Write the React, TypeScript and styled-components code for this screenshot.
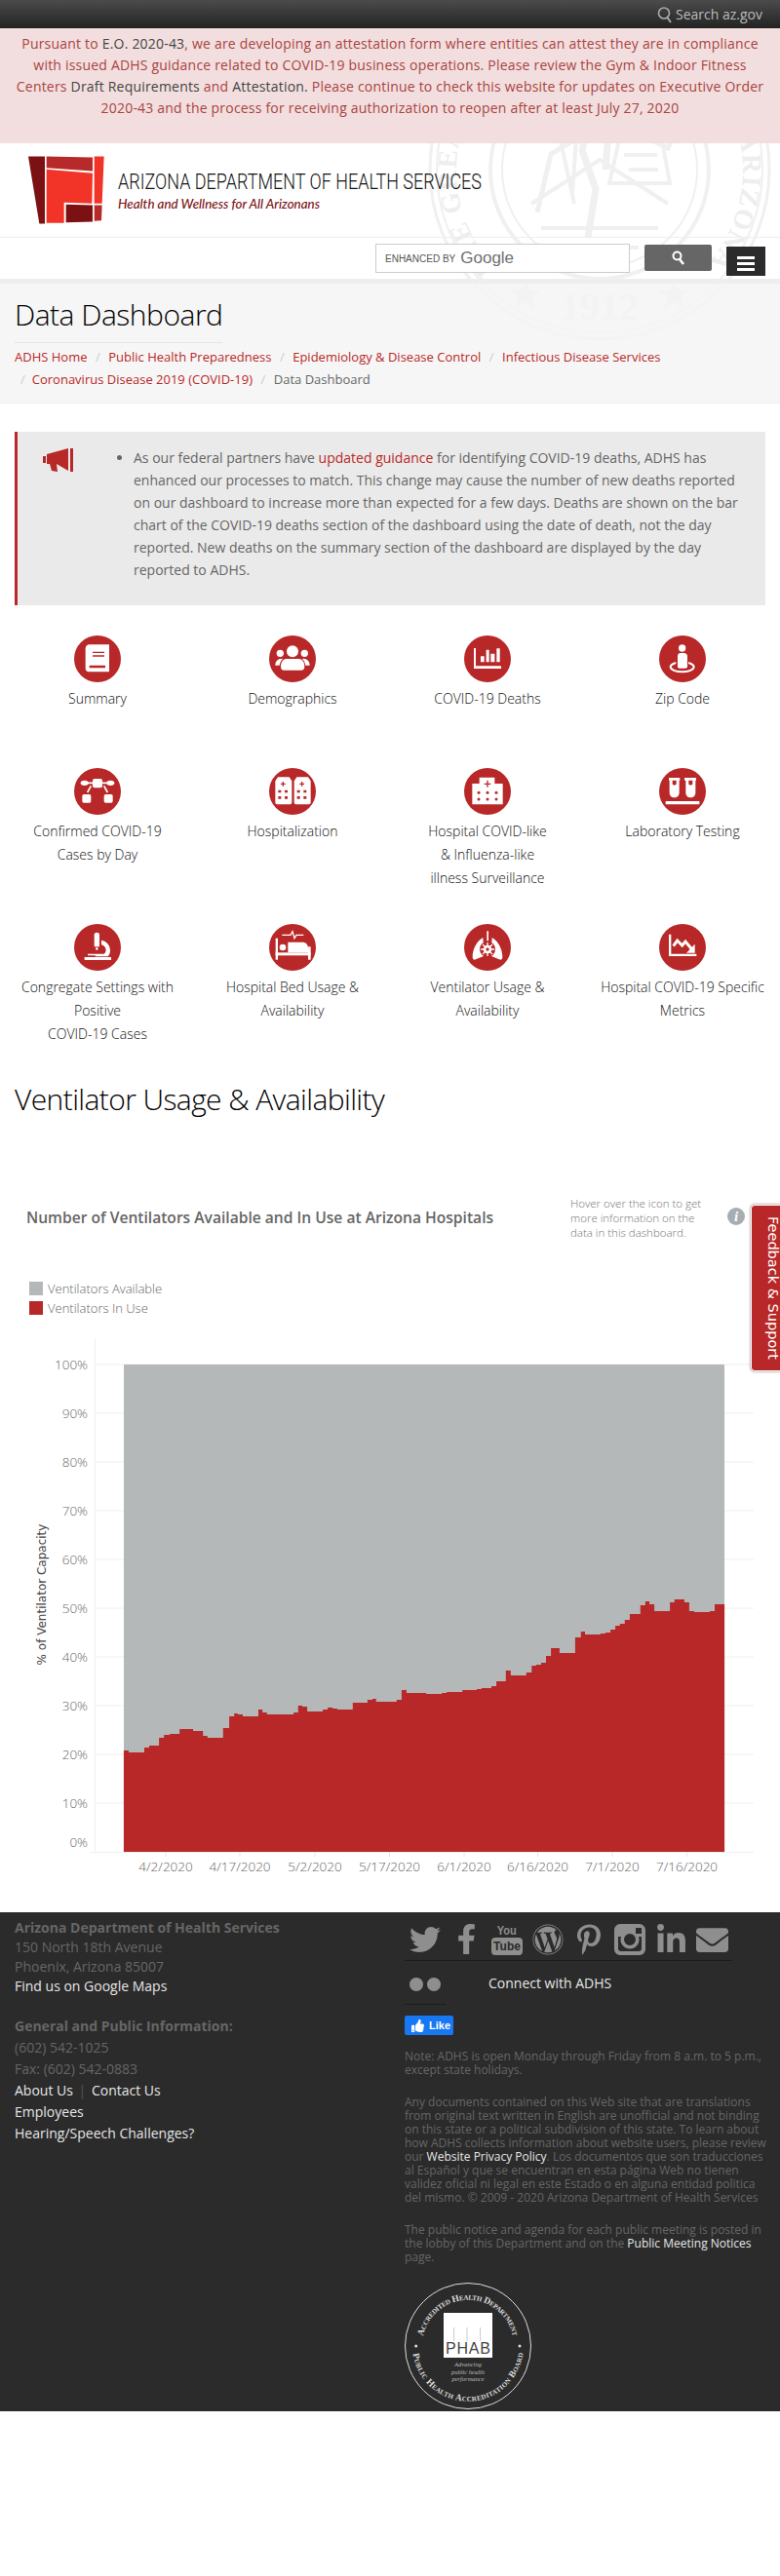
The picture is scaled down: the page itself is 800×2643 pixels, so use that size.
import React from "react";
import styled, { createGlobalStyle } from "styled-components";
import { FaTwitter, FaFacebookF, FaWordpress, FaPinterestP, FaLinkedinIn, FaEnvelope, FaThumbsUp } from "react-icons/fa";

const RED = "#b92828";

const GlobalStyle = createGlobalStyle`
  html, body { margin: 0; padding: 0; background: #fff; }
  body { font-family: "Open Sans", "Liberation Sans", sans-serif; font-size: 14px; color: #333; }
  * { box-sizing: border-box; }
`;

const steps: [number, number, number][] = [
  [64,76,588],[76,114,594],[114,126,579],[126,150,573],[150,162,549],[162,176,540],[176,200,537],[200,233,522],
  [233,257,528],[257,268,543],[268,306,549],[306,321,519],[321,333,483],[333,342,474],[342,354,477],[354,392,483],
  [392,402,462],[402,413,471],[413,478,477],[478,489,471],[489,499,450],[499,511,453],[511,549,468],[549,561,462],
  [561,573,456],[573,584,459],[584,622,462],[622,658,441],[658,670,432],[670,679,429],[679,729,438],[729,741,432],
  [741,753,402],[753,801,411],[801,839,414],[839,851,411],[851,889,408],[889,924,402],[924,936,399],[936,960,396],
  [960,972,390],[972,995,375],[995,1007,342],[1007,1045,357],[1045,1058,348],[1058,1069,327],[1069,1081,324],
  [1081,1093,318],[1093,1105,297],[1105,1126,273],[1126,1164,288],[1164,1178,240],[1178,1188,222],[1188,1226,231],
  [1226,1238,228],[1238,1250,225],[1250,1262,216],[1262,1273,204],[1273,1285,198],[1285,1297,186],[1297,1323,168],
  [1323,1335,141],[1335,1345,129],[1345,1357,138],[1357,1395,159],[1395,1406,132],[1406,1430,123],[1430,1442,132],
  [1442,1454,159],[1454,1492,162],[1492,1504,159],[1504,1528,138],
];

// chart svg starts at page y 1360, x 0
const BASE = 540;
const px = (x: number) => 100 + x / 2.376;
const py = (y: number) => 240 + y / 3;
const redArea =
  `M${px(64).toFixed(1)} ${BASE} ` +
  steps.map(([a, b, y]) => `L${px(a).toFixed(1)} ${py(y).toFixed(1)} L${px(b).toFixed(1)} ${py(y).toFixed(1)}`).join(" ") +
  ` L${px(1528).toFixed(1)} ${BASE} Z`;

const yTicks = [100, 90, 80, 70, 60, 50, 40, 30, 20, 10, 0];
const xTicks: [number, string][] = [
  [170, "4/2/2020"], [246, "4/17/2020"], [323, "5/2/2020"], [399.5, "5/17/2020"],
  [476, "6/1/2020"], [551.5, "6/16/2020"], [628, "7/1/2020"], [704.5, "7/16/2020"],
];

const Circle = () => <circle cx="72" cy="72" r="72" fill={RED} />;

const icons: Record<string, React.ReactNode> = {
  summary: (
    <>
      <Circle />
      <path fill="#fff" d="M47 28h61v84H46c-6 0-11-4-11-10V40c0-7 5-12 12-12z" />
      <path fill={RED} d="M57 50h36v4H57zM57 61h36v4H57zM47 92h49v8H47z" />
    </>
  ),
  demographics: (
    <>
      <Circle />
      <g fill="#fff">
        <circle cx="72" cy="49" r="18" />
        <circle cx="34" cy="55" r="11" />
        <circle cx="109" cy="55" r="11" />
        <path d="M52 72h40c11 0 17 12 17 24 0 7-4 11-10 11H46c-7 0-10-4-10-11 0-12 6-24 16-24z" />
        <path d="M19 92c0-12 8-21 19-21l4 1c-6 6-9 13-10 20zM125 92c0-12-8-21-19-21l-4 1c6 6 9 13 10 20z" />
      </g>
    </>
  ),
  deaths: (
    <>
      <Circle />
      <path fill="#fff" d="M30 39h6v55h78v8H30zM51 64h11v18H51zM68 44h9v38h-9zM82 56h12v26H82zM100 40h10v42h-10z" />
    </>
  ),
  zip: (
    <>
      <Circle />
      <ellipse cx="71" cy="97" rx="36" ry="15" fill="none" stroke="#fff" strokeWidth="6" />
      <circle cx="71" cy="39" r="11" fill="#fff" />
      <path fill={RED} d="M52 52h38v46H52z" />
      <path fill="#fff" d="M65 54h12c6 0 10 4 10 10v34l-6 3H62l-5-3V64c0-6 3-10 8-10z" />
    </>
  ),
  confirmed: (
    <>
      <Circle />
      <g fill="#fff">
        <rect x="57" y="33" width="30" height="28" rx="6" />
        <ellipse cx="32" cy="46" rx="12" ry="8" />
        <ellipse cx="112" cy="46" rx="12" ry="8" />
        <rect x="25" y="81" width="27" height="26" rx="5" />
        <rect x="92" y="81" width="27" height="26" rx="5" />
      </g>
      <path fill="none" stroke="#fff" strokeWidth="5" d="M42 46h16M102 46H86M52 55l-11 20M92 55l11 20" />
    </>
  ),
  hospitalization: (
    <>
      <Circle />
      <path fill="#fff" d="M27 28h35l8 12v66c0 4-2 6-6 6H25c-4 0-6-2-6-6V40zM85 28h35l8 12v66c0 4-2 6-6 6H83c-4 0-6-2-6-6V40z" />
      <path
        fill={RED}
        d="M41 42h4v5h5v4h-5v5h-4v-5h-5v-4h5zM99 42h4v5h5v4h-5v5h-4v-5h-5v-4h5zM28 68h9v8h-9zM48 68h9v8h-9zM28 87h9v8h-9zM48 87h9v8h-9zM86 68h9v8h-9zM106 68h9v8h-9zM86 87h9v8h-9zM106 87h9v8h-9z"
      />
    </>
  ),
  hospital: (
    <>
      <Circle />
      <path fill="#fff" d="M47 29h47v19h25v64H25V48h22z" />
      <path fill={RED} d="M70 38h4v9h8v4h-8v8h-4v-8h-8v-4h8z" />
      <g fill={RED}>
        {[45, 72, 99].map((cx) => [76, 96].map((cy) => <circle key={`${cx}-${cy}`} cx={cx} cy={cy} r="4.5" />))}
      </g>
    </>
  ),
  lab: (
    <>
      <Circle />
      <path fill="#fff" d="M30 30h34v8h-2v38c0 9-6 15-15 15s-15-6-15-15V38h-2zM78 30h36v8h-2v38c0 9-6 15-15 15s-15-6-15-15V38h-4z" />
      <path fill={RED} d="M41 38h12v12l-6 3-6-3zM91 38h12v12l-6 3-6-3z" />
      <path fill="#fff" d="M20 102h104v10H20z" />
    </>
  ),
  congregate: (
    <>
      <Circle />
      <path fill="#fff" d="M62 32c0-8 16-8 16 0v38H62zM67 72h6v8h-6zM84 50c17 3 27 16 27 32 0 8-3 14-7 18H66l-2-5h22c8-3 12-8 12-14 0-9-6-15-14-17zM42 92h52v5H42zM32 102h82v9H32z" />
    </>
  ),
  bed: (
    <>
      <Circle />
      <path fill="none" stroke="#fff" strokeWidth="4" d="M40 34h26l6-11 6 21 6-10h22" />
      <g fill="#fff">
        <rect x="20" y="44" width="7" height="66" />
        <rect x="20" y="88" width="108" height="9" />
        <rect x="120" y="70" width="8" height="40" />
        <path d="M58 56h44c12 0 18 8 18 18v14H58z" />
        <circle cx="42" cy="72" r="10" />
      </g>
    </>
  ),
  ventilator: (
    <>
      <Circle />
      <path fill="#fff" d="M70 22h5v30h-5zM58 42c-18 10-32 34-32 60 0 6 4 10 10 7l26-11zM86 42c18 10 32 34 32 60 0 6-4 10-10 7l-26-11z" />
      <circle cx="72" cy="78" r="24" fill={RED} />
      <circle cx="72" cy="78" r="13" fill="#fff" />
      <path stroke="#fff" strokeWidth="4" d="M72 57v42M51 78h42M57 63l30 30M87 63L57 93" />
      <circle cx="72" cy="78" r="5" fill={RED} />
    </>
  ),
  metrics: (
    <>
      <Circle />
      <path fill="#fff" d="M30 32h7v60h78v7H30z" />
      <path fill="none" stroke="#fff" strokeWidth="9" d="M44 68l12-17 15 15 10-12 20 24" />
      <path fill="#fff" d="M110 62v27H84z" />
    </>
  ),
};

type NavItem = { key: string; lines: string[] };
const navRows: { height: number; items: NavItem[] }[] = [
  {
    height: 136,
    items: [
      { key: "summary", lines: ["Summary"] },
      { key: "demographics", lines: ["Demographics"] },
      { key: "deaths", lines: ["COVID-19 Deaths"] },
      { key: "zip", lines: ["Zip Code"] },
    ],
  },
  {
    height: 160,
    items: [
      { key: "confirmed", lines: ["Confirmed COVID-19", "Cases by Day"] },
      { key: "hospitalization", lines: ["Hospitalization"] },
      { key: "hospital", lines: ["Hospital COVID-like", "& Influenza-like", "illness Surveillance"] },
      { key: "lab", lines: ["Laboratory Testing"] },
    ],
  },
  {
    height: 157,
    items: [
      { key: "congregate", lines: ["Congregate Settings with", "Positive", "COVID-19 Cases"] },
      { key: "bed", lines: ["Hospital Bed Usage &", "Availability"] },
      { key: "ventilator", lines: ["Ventilator Usage &", "Availability"] },
      { key: "metrics", lines: ["Hospital COVID-19 Specific", "Metrics"] },
    ],
  },
];

const App: React.FC = () => {
  return (
    <Page>
      <GlobalStyle />
      <TopBar>
        <svg width="16" height="18" viewBox="0 0 16 18">
          <circle cx="7" cy="7.5" r="5.5" fill="none" stroke="#aaa" strokeWidth="1.6" />
          <path d="M10.5 12l3.5 5" stroke="#aaa" strokeWidth="2" />
        </svg>
        Search az.gov
      </TopBar>
      <Alert>
        Pursuant to <AlertLink>E.O. 2020-43</AlertLink>, we are developing an attestation form where entities can attest
        they are in compliance
        <br />
        with issued ADHS guidance related to COVID-19 business operations. Please review the Gym &amp; Indoor Fitness
        <br />
        Centers <AlertLink>Draft Requirements</AlertLink> and <AlertLink>Attestation.</AlertLink> Please continue to check
        this website for updates on Executive Order
        <br />
        2020-43 and the process for receiving authorization to reopen after at least July 27, 2020
      </Alert>
      <HeaderArea>
        <Watermark width="360" height="360" viewBox="0 0 360 360">
          <defs>
            <path id="sealRing" d="M76 284A147 147 0 1 1 284 284" />
          </defs>
          <g fill="none" stroke="#f0f0f0">
            <circle cx="180" cy="180" r="174" strokeWidth="3" />
            <circle cx="180" cy="180" r="167" strokeWidth="2" />
            <circle cx="180" cy="180" r="112" strokeWidth="4" />
            <circle cx="180" cy="180" r="100" strokeWidth="2" />
            <path strokeWidth="5" d="M96 150l34-62 46 18 40-22 46 50-12 24-60-30-60 36-14 60" />
            <path strokeWidth="4" d="M110 215l70-45 70 45M130 105l24 110M158 120l-6 84M200 150h44l8 44h-62zM205 165h34M210 180h30M120 240h120M140 260h80" />
            <path strokeWidth="7" d="M172 120l-10 40 14 40-8 50M190 130l-4 50" />
          </g>
          <text fontFamily="Liberation Serif, serif" fontSize="28" fontWeight="700" fill="#eeeeee">
            <textPath href="#sealRing" textLength="680">THE GREAT SEAL OF THE STATE OF ARIZONA</textPath>
          </text>
          <path fill="#ececec" d="M104 292l4 11 12 1-9 7 3 12-10-7-10 7 3-12-9-7 12-1zM256 292l4 11 12 1-9 7 3 12-10-7-10 7 3-12-9-7 12-1z" />
          <text x="180" y="334" textAnchor="middle" fontFamily="Liberation Serif, serif" fontSize="40" fontWeight="700" fill="#e6e6e6">
            1912
          </text>
        </Watermark>
        <LogoRow>
          <svg width="480" height="74" viewBox="0 0 480 74">
            <g transform="translate(-29 -158.5) translate(0 130) scale(0.3333)">
              <path fill="#7b1113" d="M87 93h51v207h-17z" />
              <path fill="#b82a29" d="M143 93l142 3v42l-142-10z" />
              <path fill="#f23327" d="M290 93h30l-6 145h-24zM143 133l142 12-2 93-86-3v63h-54z" />
              <path fill="#7b1113" d="M203 241l82 2v51l-82 2z" />
              <path fill="#b82a29" d="M290 243h24l-2 47-22 2z" />
            </g>
            <LogoTitle x="92" y="36" textLength="373" lengthAdjust="spacingAndGlyphs">
              ARIZONA DEPARTMENT OF HEALTH SERVICES
            </LogoTitle>
            <LogoTag x="92" y="56" textLength="207" lengthAdjust="spacingAndGlyphs">
              Health and Wellness for All Arizonans
            </LogoTag>
          </svg>
        </LogoRow>
        <SearchRow>
          <SearchInput>
            <Enhanced>ENHANCED BY</Enhanced>
            <GoogleWord>Google</GoogleWord>
          </SearchInput>
          <SearchButton>
            <svg width="14" height="15" viewBox="0 0 14 15">
              <circle cx="5.5" cy="5.5" r="4" fill="none" stroke="#fff" strokeWidth="2" />
              <path d="M8 9l4 5" stroke="#fff" strokeWidth="2.6" />
            </svg>
          </SearchButton>
          <MenuButton>
            <span />
            <span />
            <span />
          </MenuButton>
        </SearchRow>
        <TitleArea>
          <TitleBlock>
            <PageTitle>Data Dashboard</PageTitle>
          </TitleBlock>
          <Crumbs>
            <Crumb>ADHS Home</Crumb>
            <Sep>/</Sep>
            <Crumb>Public Health Preparedness</Crumb>
            <Sep>/</Sep>
            <Crumb>Epidemiology &amp; Disease Control</Crumb>
            <Sep>/</Sep>
            <Crumb>Infectious Disease Services</Crumb>
            <br />
            <Sep $first>/</Sep>
            <Crumb>Coronavirus Disease 2019 (COVID-19)</Crumb>
            <Sep>/</Sep>
            <CrumbCurrent>Data Dashboard</CrumbCurrent>
          </Crumbs>
        </TitleArea>
      </HeaderArea>

      <Notice>
        <NoticeIcon>
          <svg width="32" height="24" viewBox="0 0 32 24">
            <path fill={RED} d="M0 8h3v7H0zM4 6l22-6v23L14 16l1 8-6-1-2-7H4zM28 0h3v24h-3z" />
          </svg>
        </NoticeIcon>
        <NoticeList>
          <li>
            As our federal partners have <NoticeLink>updated guidance</NoticeLink> for identifying COVID-19 deaths, ADHS
            has enhanced our processes to match. This change may cause the number of new deaths reported on our dashboard
            to increase more than expected for a few days. Deaths are shown on the bar chart of the COVID-19 deaths
            section of the dashboard using the date of death, not the day reported. New deaths on the summary section of
            the dashboard are displayed by the day reported to ADHS.
          </li>
        </NoticeList>
      </Notice>

      <Nav>
        {navRows.map((row) => (
          <NavRow key={row.height + row.items[0].key} $height={row.height}>
            {row.items.map((item) => (
              <NavCell key={item.key}>
                <svg width="48" height="48" viewBox="0 0 144 144">
                  {icons[item.key]}
                </svg>
                <NavLabel>
                  {item.lines.map((line) => (
                    <span key={line}>{line}</span>
                  ))}
                </NavLabel>
              </NavCell>
            ))}
          </NavRow>
        ))}
      </Nav>

      <SectionTitle>Ventilator Usage &amp; Availability</SectionTitle>

      <ChartHead>
        <ChartTitle>Number of Ventilators Available and In Use at Arizona Hospitals</ChartTitle>
        <Hover>
          Hover over the icon to get
          <br />
          more information on the
          <br />
          data in this dashboard.
        </Hover>
        <Info>i</Info>
      </ChartHead>
      <Legend>
        <LegendRow>
          <Swatch $color="#b4b8b8" />
          Ventilators Available
        </LegendRow>
        <LegendRow>
          <Swatch $color={RED} />
          Ventilators In Use
        </LegendRow>
      </Legend>
      <Chart width="800" height="575" viewBox="0 0 800 575">
        <path d={`M97.5 13V${BASE + 0.5}M92 ${BASE + 0.5}H773`} stroke="#efefef" fill="none" />
        {yTicks.map((t, i) => (
          <g key={t}>
            {t > 0 && <path d={`M97.5 ${40 + i * 50}H773`} stroke="#efefef" />}
            <AxisText x="90" y={(t === 0 ? 35 : 44.5) + i * 50} textAnchor="end">
              {t}%
            </AxisText>
          </g>
        ))}
        <rect x="127" y="40" width="616" height="500" fill="#b4b8b8" />
        <path d={redArea} fill={RED} />
        {xTicks.map(([x, label]) => (
          <g key={label}>
            <path d={`M${x} ${BASE}v5`} stroke="#e4e4e4" />
            <AxisText x={x} y="560" textAnchor="middle">
              {label}
            </AxisText>
          </g>
        ))}
        <AxisName transform="translate(47 276) rotate(-90)" textAnchor="middle">
          % of Ventilator Capacity
        </AxisName>
      </Chart>

      <Footer>
        <FooterLeft>
          <Address>
            <strong>Arizona Department of Health Services</strong>
            <br />
            150 North 18th Avenue
            <br />
            Phoenix, Arizona 85007
            <br />
            <FooterLink>Find us on Google Maps</FooterLink>
          </Address>
          <Contact>
            <strong>General and Public Information:</strong>
            <br />
            (602) 542-1025
            <br />
            Fax: (602) 542-0883
            <br />
            <FooterLink>About Us</FooterLink> <Divider>|</Divider> <FooterLink>Contact Us</FooterLink>
            <br />
            <FooterLink>Employees</FooterLink>
            <br />
            <FooterLink>Hearing/Speech Challenges?</FooterLink>
          </Contact>
        </FooterLeft>
        <FooterRight>
          <SocialRow>
            <SocialCell><FaTwitter size={32} /></SocialCell>
            <SocialCell><FaFacebookF size={31} /></SocialCell>
            <SocialCell>
              <YouTube>
                <YouWord>You</YouWord>
                <TubeWord>Tube</TubeWord>
              </YouTube>
            </SocialCell>
            <SocialCell><FaWordpress size={32} /></SocialCell>
            <SocialCell><FaPinterestP size={32} /></SocialCell>
            <SocialCell>
              <svg width="32" height="32" viewBox="0 0 32 32">
                <path
                  fill="#8e8e8e"
                  fillRule="evenodd"
                  d="M6 0h20c3 0 6 3 6 6v20c0 3-3 6-6 6H6c-3 0-6-3-6-6V6c0-3 3-6 6-6zM22 4v6h6V4zM4 13v12c0 2 1 3 3 3h18c2 0 3-1 3-3V13h-3a9.5 9.5 0 1 1-18 0zM16 10a6 6 0 1 0 0 12 6 6 0 0 0 0-12z"
                />
              </svg>
            </SocialCell>
            <SocialCell><FaLinkedinIn size={33} /></SocialCell>
            <SocialCell><FaEnvelope size={33} /></SocialCell>
          </SocialRow>
          <ConnectRow>
            <FlickrCell>
              <svg width="32" height="14" viewBox="0 0 32 14">
                <circle cx="7" cy="7" r="7" fill="#8e8e8e" />
                <circle cx="25" cy="7" r="7" fill="#8e8e8e" />
              </svg>
            </FlickrCell>
            <Connect>Connect with ADHS</Connect>
          </ConnectRow>
          <Like>
            <FaThumbsUp size={13} />
            Like
          </Like>
          <Small>
            Note: ADHS is open Monday through Friday from 8 a.m. to 5 p.m., except state holidays.
          </Small>
          <Small>
            Any documents contained on this Web site that are translations from original text written in English are
            unofficial and not binding on this state or a political subdivision of this state. To learn about how ADHS
            collects information about website users, please review our <SmallLink>Website Privacy Policy</SmallLink>. Los
            documentos que son traducciones al Español y que se encuentran en esta página Web no tienen validez oficial ni
            legal en este Estado o en alguna entidad politica del mismo. © 2009 - 2020 Arizona Department of Health
            Services
          </Small>
          <Small>
            The public notice and agenda for each public meeting is posted in the lobby of this Department and on the{" "}
            <SmallLink>Public Meeting Notices</SmallLink> page.
          </Small>
          <svg width="130" height="130" viewBox="0 0 130 130">
            <defs>
              <path id="phabTop" d="M19 55A47 47 0 0 1 111 55" />
              <path id="phabBottom" d="M8.6 73A57 57 0 0 0 121.4 73" />
            </defs>
            <circle cx="65" cy="65" r="64.5" fill="none" stroke="#ddd" strokeWidth="1" />
            <SealText>
              <textPath href="#phabTop" textLength="128">Accredited Health Department</textPath>
            </SealText>
            <SealText>
              <textPath href="#phabBottom" textLength="163">Public Health Accreditation Board</textPath>
            </SealText>
            <circle cx="11.7" cy="65" r="1.5" fill="#ddd" />
            <circle cx="118" cy="65" r="1.5" fill="#ddd" />
            <rect x="40" y="31" width="50" height="46" fill="#fff" />
            <path d="M50.6 46v14M64 46v14M77.6 46v14" stroke="#ccc" strokeWidth="1" />
            <PhabText x="65" y="72.5" textAnchor="middle" textLength="46">PHAB</PhabText>
            <SealNote x="65" y="86" textAnchor="middle">Advancing</SealNote>
            <SealNote x="65" y="93.5" textAnchor="middle">public health</SealNote>
            <SealNote x="65" y="101" textAnchor="middle">performance</SealNote>
          </svg>
        </FooterRight>
      </Footer>

      <Feedback>Feedback &amp; Support</Feedback>
    </Page>
  );
};

const Page = styled.div`
  position: relative;
  width: 800px;
  min-height: 2643px;
  overflow: hidden;
`;

const TopBar = styled.div`
  height: 29px;
  display: flex;
  align-items: center;
  justify-content: flex-end;
  gap: 3px;
  padding-right: 18px;
  background: linear-gradient(#4b4b4b, #232323);
  color: #bbb;
  font-size: 14px;
`;

const Alert = styled.div`
  height: 118px;
  padding: 5px 5px 0;
  background: #f2dede;
  color: #a94442;
  font-size: 14px;
  letter-spacing: 0.2px;
  line-height: 22px;
  text-align: center;
  white-space: nowrap;
`;

const AlertLink = styled.span`
  color: #444;
`;

const HeaderArea = styled.div`
  position: relative;
`;

const Watermark = styled.svg`
  position: absolute;
  left: 435px;
  top: -153px;
  clip-path: inset(153px 0 0 0);
`;

const LogoRow = styled.div`
  position: relative;
  height: 97px;
  padding: 11px 0 0 29px;
  border-bottom: 1px solid #eee;
`;

const LogoTitle = styled.text`
  font-family: Roboto, "Liberation Sans", sans-serif;
  font-weight: 300;
  font-size: 22px;
  fill: #111;
`;

const LogoTag = styled.text`
  font-family: Lato, "Open Sans", sans-serif;
  font-style: italic;
  font-weight: 500;
  font-size: 13.5px;
  fill: #7b1113;
`;

const SearchRow = styled.div`
  position: relative;
  height: 47px;
  display: flex;
  align-items: flex-start;
  padding: 6px 15px 0 385px;
  border-bottom: 5px solid #eeeeee;
`;

const SearchInput = styled.div`
  width: 261px;
  height: 30px;
  display: flex;
  align-items: center;
  padding-left: 9px;
  gap: 5px;
  background: #fff;
  border: 1px solid #ccc;
`;

const Enhanced = styled.span`
  font-family: "Liberation Sans", Arial, sans-serif;
  font-size: 10px;
  color: #555;
`;

const GoogleWord = styled.span`
  font-family: "Liberation Sans", Arial, sans-serif;
  font-size: 17px;
  color: #707070;
`;

const SearchButton = styled.div`
  width: 69px;
  height: 27px;
  margin: 1px 0 0 15px;
  display: flex;
  align-items: center;
  justify-content: center;
  background: #666;
  border-radius: 2px;
`;

const MenuButton = styled.div`
  width: 40px;
  height: 30px;
  margin: 3px 0 0 15px;
  padding: 10px 11px 0;
  background: #2b2b2b;
  display: flex;
  flex-direction: column;
  gap: 3.5px;

  span {
    display: block;
    height: 2.6px;
    background: #fff;
  }
`;

const TitleArea = styled.div`
  position: relative;
  height: 123px;
  padding: 0 15px;
  background: rgba(245, 245, 245, 0.85);
  border-bottom: 1px solid #eee;
`;

const TitleBlock = styled.div`
  width: fit-content;
  height: 61px;
  border-bottom: 1px solid #e4e4e4;
`;

const PageTitle = styled.h1`
  margin: 0;
  padding-top: 10px;
  font-weight: 300;
  font-size: 30px;
  line-height: 44px;
  color: #000;
  letter-spacing: -0.5px;
`;

const Crumbs = styled.div`
  line-height: 23px;
  padding-top: 3px;
  font-size: 13px;
`;

const Crumb = styled.span`
  color: ${RED};
`;

const CrumbCurrent = styled.span`
  color: #666;
`;

const Sep = styled.span<{ $first?: boolean }>`
  color: #ccc;
  margin: ${(p) => (p.$first ? "0 7px 0 6px" : "0 8.5px")};
`;

const Notice = styled.div`
  height: 178px;
  margin: 29px 15px 0;
  display: flex;
  background: #eaeaea;
  border-left: 3px solid ${RED};
`;

const NoticeIcon = styled.div`
  flex: 0 0 104px;
  padding: 17px 0 0 26px;
`;

const NoticeList = styled.ul`
  margin: 0;
  padding: 15px 20px 0 15px;
  color: #666;
  font-size: 14px;
  line-height: 23px;
`;

const NoticeLink = styled.span`
  color: ${RED};
`;

const Nav = styled.div`
  padding-top: 31px;
`;

const NavRow = styled.div<{ $height: number }>`
  display: grid;
  grid-template-columns: repeat(4, 200px);
  height: ${(p) => p.$height}px;
`;

const NavCell = styled.div`
  display: flex;
  flex-direction: column;
  align-items: center;
  text-align: center;
`;

const NavLabel = styled.div`
  margin-top: 5px;
  display: flex;
  flex-direction: column;
  font-size: 14px;
  line-height: 24px;
  font-weight: 300;
  color: #111;
  white-space: nowrap;
`;

const SectionTitle = styled.h2`
  margin: 0;
  padding: 0 15px;
  font-weight: 300;
  font-size: 30px;
  line-height: 46px;
  color: #000;
  letter-spacing: -0.6px;
`;

const ChartHead = styled.div`
  position: relative;
  display: flex;
  align-items: flex-start;
  height: 62px;
  margin-top: 71px;
  padding-left: 27px;
`;

const ChartTitle = styled.div`
  width: 558px;
  margin-top: 16px;
  font-family: "Open Sans", sans-serif;
  font-weight: 600;
  font-size: 15.6px;
  color: #666;
  white-space: nowrap;
`;

const Hover = styled.div`
  width: 158px;
  margin-top: 5px;
  font-size: 11.5px;
  line-height: 15px;
  font-weight: 300;
  color: #777;
  white-space: nowrap;
`;

const Info = styled.div`
  width: 18px;
  height: 18px;
  margin: 17px 0 0 3px;
  border-radius: 50%;
  background: #a7adb3;
  color: #fff;
  font-family: "Liberation Serif", serif;
  font-style: italic;
  font-weight: 700;
  font-size: 15px;
  line-height: 18px;
  text-align: center;
`;

const Legend = styled.div`
  display: flex;
  flex-direction: column;
  gap: 6px;
  margin-top: 31px;
  padding-left: 30px;
`;

const LegendRow = styled.div`
  display: flex;
  align-items: center;
  gap: 5px;
  height: 14px;
  font-size: 13px;
  font-weight: 300;
  color: #666;
`;

const Swatch = styled.span<{ $color: string }>`
  width: 14px;
  height: 14px;
  background: ${(p) => p.$color};
`;

const Chart = styled.svg`
  display: block;
  margin-top: 11px;
`;

const AxisText = styled.text`
  font-family: "Open Sans", sans-serif;
  font-size: 13.5px;
  font-weight: 300;
  fill: #666;
`;

const AxisName = styled.text`
  font-family: "DejaVu Sans", sans-serif;
  font-size: 12px;
  fill: #444;
`;

const Footer = styled.div`
  height: 512px;
  margin-top: 27px;
  display: flex;
  overflow: hidden;
  background: #2b2b2b;
  color: #666;
`;

const FooterLeft = styled.div`
  width: 400px;
  padding: 6px 0 0 15px;
`;

const Address = styled.div`
  font-size: 14px;
  line-height: 20px;
`;

const Contact = styled.div`
  margin-top: 20px;
  font-size: 14px;
  line-height: 22px;
`;

const FooterLink = styled.span`
  color: #e6e6e6;
`;

const Divider = styled.span`
  color: #555;
  margin: 0 2px;
`;

const FooterRight = styled.div`
  width: 400px;
  padding: 0 10px 0 15px;
`;

const SocialRow = styled.div`
  display: flex;
  height: 50px;
  width: 336px;
  padding-top: 12px;
  border-bottom: 1px solid #1c1c1c;
`;

const SocialCell = styled.div`
  width: 42px;
  height: 32px;
  display: flex;
  justify-content: center;
  color: #8e8e8e;
`;

const YouTube = styled.div`
  display: flex;
  flex-direction: column;
  align-items: center;
  color: #8e8e8e;
  font-family: "Liberation Sans", Arial, sans-serif;
  font-weight: 700;
  font-size: 12px;
`;

const YouWord = styled.span`
  line-height: 14px;
  font-size: 13px;
  transform: scaleX(0.85);
`;

const TubeWord = styled.span`
  width: 32px;
  height: 18px;
  line-height: 18px;
  background: #8e8e8e;
  color: #2b2b2b;
  border-radius: 4px;
  text-align: center;
`;

const ConnectRow = styled.div`
  display: flex;
  align-items: center;
  height: 45px;
`;

const FlickrCell = styled.div`
  width: 42px;
  height: 45px;
  padding: 16px 0 0 5px;
  border-bottom: 1px solid #1c1c1c;
`;

const Connect = styled.div`
  margin-left: 44px;
  font-size: 14px;
  color: #e6e6e6;
`;

const Like = styled.div`
  width: 50px;
  height: 20px;
  margin-top: 11px;
  display: flex;
  align-items: center;
  gap: 5px;
  padding-left: 7px;
  background: #1877f2;
  border-radius: 2px;
  color: #fff;
  font-family: "Liberation Sans", Arial, sans-serif;
  font-weight: 700;
  font-size: 11px;
`;

const Small = styled.p`
  margin: 15px 0 19px;
  font-size: 12px;
  line-height: 14px;
  color: #666;

  & + & {
    margin-top: 0;
  }
  & + & + & {
    margin-top: 2px;
  }
`;

const SmallLink = styled.span`
  color: #e6e6e6;
`;

const SealText = styled.text`
  font-family: "Liberation Serif", serif;
  font-weight: 700;
  font-size: 9.5px;
  font-variant: small-caps;
  fill: #ddd;
`;

const PhabText = styled.text`
  font-family: "Liberation Sans", Arial, sans-serif;
  font-size: 16px;
  fill: #444;
`;

const SealNote = styled.text`
  font-family: "Liberation Serif", serif;
  font-style: italic;
  font-size: 6.5px;
  fill: #bbb;
`;

const Feedback = styled.div`
  position: absolute;
  left: 770px;
  top: 1236px;
  width: 32px;
  height: 171px;
  padding: 11px 0 0 3px;
  background: ${RED};
  border-radius: 4px 0 0 4px;
  box-shadow: 0 0 2px 1px rgba(0, 0, 0, 0.25);
  border: 1px solid #fff;
  color: #fff;
  font-family: "DejaVu Sans", sans-serif;
  font-size: 14.5px;
  writing-mode: vertical-rl;
  white-space: nowrap;
`;

export default App;
